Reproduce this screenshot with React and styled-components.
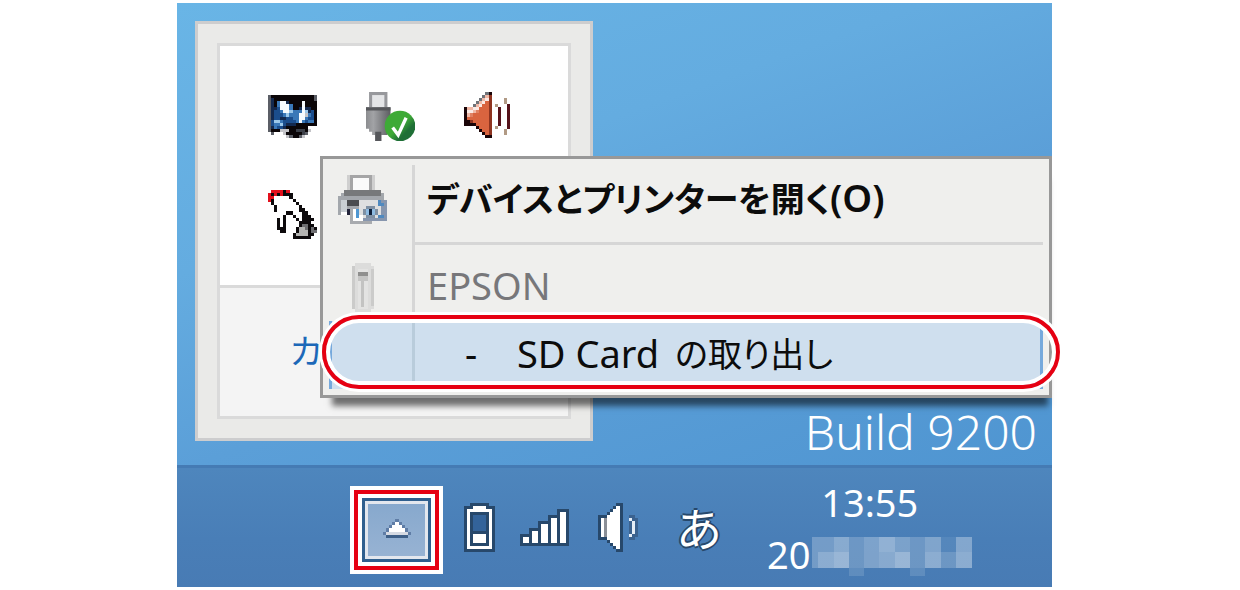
import React from 'react';
import styled, { createGlobalStyle } from 'styled-components';

const GlobalStyle = createGlobalStyle`
    * {
        box-sizing: border-box;
    }
    body {
        margin: 0;
        background: #fff;
        font-family: "Noto Sans", "Noto Sans CJK JP", sans-serif;
    }
    button {
        font: inherit;
        color: inherit;
        background: none;
        border: 0;
        padding: 0;
        margin: 0;
    }
`;

/* 16x16 bitmaps, one character per pixel */
const monitor = {
    colors: { g: '#5b5e66', d: '#3c4048', k: '#0b0608', n: '#13294f', b: '#3a78b8', B: '#1b4d8c', w: '#9cc8ea', W: '#f6fbff', s: '#c4c4c8' },
    rows: [
        '................',
        'gkkkkkkkkkkkkkkg',
        'gnkkkkkkkkkkkkkg',
        'gnkbWWnkkkkWkkkk',
        'gnkbWWWbkkkWkkkk',
        'gnnBWWWbkknWnnkk',
        'gnBBbWWwbbbWwnBk',
        'gnBBBbwbbbWWsbBk',
        'gnBBnnBBbbWWbBBk',
        'gBwwbBBBBbWbBbbk',
        'gBbbwBnnnkkkkkkk',
        'gnbBBnkkkkkkk...',
        'gkkkssskkdddks..',
        '.g...skkkkkdg...',
        '......sgkkgs....',
    ],
};

const speaker = {
    colors: { g: '#6f7378', k: '#1a0508', l: '#f0b8a6', w: '#fbe9e4', r: '#e08062', R: '#d9643f', D: '#8e3420', m: '#56131b', t: '#b19a85' },
    rows: [
        '.......gk.......',
        '......glD.......',
        '.....glwD....t..',
        '....glwRD....t..',
        '...glwRRD.t...m.',
        'kllwwRRRD..m..m.',
        'kwwlrRRRD..m..m.',
        'klrRRRRRD..m..m.',
        'kRRRRRRRD..m..m.',
        'kkDRRRRRD..m..m.',
        'kkkkRRRRD..m..m.',
        '....kRRRD.t...m.',
        '.....kRRD....t..',
        '......kRD....t..',
        '.......kk.......',
    ],
};

const tablet = {
    colors: { k: '#0d0a0c', r: '#e3101c', g: '#b4b4b2', d: '#6d6d70' },
    rows: [
        '.rrrrkr.........',
        'rkrkrkkk........',
        'rr.....k........',
        'rk......k.......',
        '.k.......k......',
        '..k.......k.....',
        '..k.......kk....',
        '......kk...kk...',
        '.....k..k..kkk..',
        '...k.k...k.kkkk.',
        '...k.k....kkkk..',
        '...k.k....kddkk.',
        '...kkk...kggdkdk',
        '....kk...kgggkdd',
        '........kggggkk.',
        '........kkkkkk..',
    ],
};

const PixelIcon = ({ art }) => (
    <svg width="49" height="49" viewBox="0 0 16 16" shapeRendering="crispEdges" aria-hidden="true">
        {art.rows.map((row, y) =>
            row.split('').map((c, x) =>
                c === '.' ? null : <rect key={x + '-' + y} x={x} y={y} width="1.03" height="1.03" fill={art.colors[c]} />
            )
        )}
    </svg>
);

const UsbIcon = () => (
    <svg width="49" height="49" viewBox="0 0 16 16" aria-hidden="true">
        <defs>
            <linearGradient id="plug" x1="0" x2="1">
                <stop offset="0" stopColor="#8b8c8f" />
                <stop offset="0.3" stopColor="#a2a3a6" />
                <stop offset="1" stopColor="#5c5d61" />
            </linearGradient>
            <linearGradient id="ok" x1="0" y1="0" x2="1" y2="1">
                <stop offset="0.5" stopColor="#3eaa36" />
                <stop offset="0.7" stopColor="#1f6f36" />
            </linearGradient>
        </defs>
        <path d="M1 0h6v5H1z" fill="#97989c" />
        <path d="M2 1h4v4H2z" fill="#e4e5e7" />
        <path d="M0 5h8v7H7v2H5v2H3v-2H2v-1H1v-1H0z" fill="url(#plug)" />
        <path d="M0 5h8v1H0z M3 13h2v3H3z" fill="#56575b" />
        <circle cx="11.1" cy="11.1" r="5" fill="url(#ok)" />
        <path d="M8.7 11.6l1.8 2.4 2.6-5.6" fill="none" stroke="#fff" strokeWidth="1.1" />
    </svg>
);

const PrinterIcon = () => (
    <svg width="49" height="49" viewBox="0 0 16 16" shapeRendering="crispEdges" aria-hidden="true">
        <path d="M3 0h9v6H3z" fill="#cfcfcf" />
        <path d="M4 0h7v5H4z" fill="#a5a5a6" />
        <path d="M5 1h5v4H5z" fill="#fafafa" />
        <path d="M1 6h1V5h12v1h1v2h1v5H0V7h1z" fill="#a3a7ac" />
        <path d="M2 5h12v2H2z" fill="#77797b" />
        <path d="M1 8h2v4H1z" fill="#c9cfd4" />
        <path d="M3 8h5v2H3z" fill="#4a4c50" />
        <path d="M1 12h3v1H1z" fill="#fff" />
        <path d="M3 11h1v2H3z" fill="#23243a" />
        <path d="M4 11h7v5H4z" fill="#a8abaf" />
        <path d="M5 11h5v4H5z" fill="#fff" />
        <path d="M6 11h1v3H6z" fill="#4f97d2" />
        <path d="M12 8h4v7H8v-1h4z" fill="#8796ae" />
        <path d="M7 8h6v1h1v4h-1v1H8v-1H7z" fill="#dedfe0" />
        <path d="M13 8h1v1h1v1h-2zM13 13h2v1h-2z" fill="#4f89bf" />
        <path d="M9 10h3v1h1v2h-1v1H9v-1H8v-2h1z" fill="#7f90a3" />
        <path d="M9 11h3v2H9z" fill="#8fbce2" />
        <path d="M10 11h1v2h-1z" fill="#0f1f3a" />
    </svg>
);

const DriveIcon = () => (
    <svg width="22" height="49" viewBox="0 0 22 49" shapeRendering="crispEdges" aria-hidden="true">
        <path d="M3 0h16v3h3v43h-3v3H3v-3H0V3h3z" fill="#dcdcdb" />
        <path d="M0 3h3v43H0zM19 6h3v37h-3z" fill="#cbcbca" />
        <path d="M6 6h10v40H6z" fill="#e3e3e2" />
        <path d="M6 9h10v9H6z" fill="#c4c4c3" />
        <path d="M6 9h10v4H6z" fill="#8f8f8e" />
        <path d="M9 18h3v26H9z" fill="#c3c3c2" />
    </svg>
);

const ArrowIcon = () => (
    <svg width="28" height="22" viewBox="0 0 9 7" shapeRendering="crispEdges" aria-hidden="true">
        <path d="M4 0h1v1h1v1h1v1h1v1h1v1H8v1H1V5H0V4h1V3h1V2h1V1h1z" fill="#5f7da6" />
        <path d="M4 1h1v1h1v1h1v1h1v1H1V4h1V3h1V2h1z" fill="#fff" />
        <path d="M1 4h7v1H1z" fill="#d5dae3" />
        <path d="M1 5h7v1H1z" fill="#3d5f88" />
    </svg>
);

const BatteryIcon = () => (
    <svg width="31" height="49" viewBox="0 0 10 16" shapeRendering="crispEdges" aria-hidden="true">
        <path d="M2 0h6v1h2v15H0V1h2z" fill="#27486b" />
        <path d="M3 1h4v1h2v13H1V2h2z" fill="#fff" />
        <path d="M2 3h6v11H2z" fill="#27486b" />
        <path d="M3 4h4v5H3z" fill="#33639a" />
        <path d="M3 10h4v3H3z" fill="#fff" />
    </svg>
);

const SignalIcon = () => (
    <svg width="49" height="37" viewBox="0 0 16 12" shapeRendering="crispEdges" aria-hidden="true">
        <path d="M0 8h3V6h3V4h3V2h3V0h4v12H0z" fill="#27486b" />
        <path d="M1 9h2v2H1zM4 7h2v4H4zM7 5h2v6H7zM10 3h2v8h-2zM13 1h2v10h-2z" fill="#fff" />
    </svg>
);

const VolumeIcon = () => (
    <svg width="43" height="49" viewBox="0 0 14 16" shapeRendering="crispEdges" aria-hidden="true">
        <path d="M0 4h3V3h1V2h1V1h1V0h2v16H6v-1H5v-1H4v-1H3v-1H0z" fill="#27486b" />
        <path d="M1 5h2V4h1V3h1V2h1V1h1v14H6v-1H5v-1H4v-1H3v-1H1z" fill="#fff" />
        <path d="M2 5h1v6H2z" fill="#8b8f96" />
        <path d="M10 4h2v1h1v6h-1v1h-2z" fill="#3b628f" />
        <path d="M10 5h1v1h1v4h-1v1h-1v-1h1V6h-1z" fill="#e6eef7" />
    </svg>
);

/* [x, y, width, height, opacity] */
const mosaic = [
    [0, 0, 22, 15, 0.24], [22, 0, 15, 15, 0.35], [37, 0, 15, 31, 0.2], [52, 0, 15, 31, 0.29],
    [67, 0, 16, 15, 0.4], [83, 0, 15, 15, 0.28], [98, 0, 15, 31, 0.2], [113, 0, 16, 15, 0.3],
    [129, 0, 15, 15, 0.07], [144, 0, 16, 15, 0.32],
    [0, 15, 6, 16, 0.24], [6, 15, 16, 16, 0.37], [22, 15, 15, 16, 0.44], [67, 15, 16, 16, 0.35],
    [83, 15, 15, 16, 0.44], [113, 15, 16, 16, 0.37], [129, 15, 15, 16, 0.2], [144, 15, 16, 16, 0.37],
    [37, 31, 15, 8, 0.13], [98, 31, 15, 8, 0.13],
];

const Mosaic = () => (
    <svg width="160" height="39" viewBox="0 0 160 39" shapeRendering="crispEdges" aria-hidden="true">
        {mosaic.map(([x, y, w, h, o]) => (
            <rect key={x + '-' + y} x={x} y={y} width={w} height={h} fill="#fff" fillOpacity={o} />
        ))}
    </svg>
);

const App = () => {
    return (
        <Page>
            <GlobalStyle />
            <Desktop>
                <Flyout>
                    <FlyoutBody>
                        <TrayGrid>
                            <button aria-label="Display"><PixelIcon art={monitor} /></button>
                            <button aria-label="USB"><UsbIcon /></button>
                            <button aria-label="Sound"><PixelIcon art={speaker} /></button>
                            <button aria-label="Pen"><PixelIcon art={tablet} /></button>
                        </TrayGrid>
                        <FlyoutFooter>
                            <CustomizeLink href="#customize">カ</CustomizeLink>
                        </FlyoutFooter>
                    </FlyoutBody>
                </Flyout>

                <Menu role="menu">
                    <MenuItem role="menuitem">
                        <MenuIcon><PrinterIcon /></MenuIcon>
                        <MenuLabel $bold><span><Kana>デバイスとプリンターを開く</Kana>(O)</span></MenuLabel>
                    </MenuItem>
                    <Separator><hr /></Separator>
                    <MenuItem role="menuitem" disabled>
                        <MenuIcon><DriveIcon /></MenuIcon>
                        <MenuLabel>EPSON</MenuLabel>
                    </MenuItem>
                    <ActiveItem role="menuitem">
                        <MenuIcon />
                        <MenuLabel $indent>
                            <Dash>-</Dash>
                            <CardName>SD Card</CardName>
                            <Kana>の取り出し</Kana>
                        </MenuLabel>
                    </ActiveItem>
                </Menu>

                <BuildLabel>Build 9200</BuildLabel>
            </Desktop>

            <Taskbar>
                <Marker>
                    <ShowHidden aria-label="Show hidden icons"><ArrowIcon /></ShowHidden>
                </Marker>
                <TrayButton aria-label="Battery"><BatteryIcon /></TrayButton>
                <TrayButton aria-label="Network"><SignalIcon /></TrayButton>
                <TrayButton aria-label="Volume"><VolumeIcon /></TrayButton>
                <TrayButton><Ime>あ</Ime></TrayButton>
                <Clock>
                    <span>13:55</span>
                    <ClockDate>20<Mosaic /></ClockDate>
                </Clock>
            </Taskbar>
        </Page>
    );
};

const Page = styled.div`
    display: flex;
    flex-direction: column;
    min-height: 100vh;
    padding: 3px 188px 3px 177px;
`;

const Desktop = styled.main`
    position: relative;
    flex: 1;
    display: flex;
    justify-content: flex-end;
    align-items: flex-end;
    min-height: 440px;
    padding: 0 15px 2px;
    background: linear-gradient(160deg, #69b5e6 0%, #64ace0 35%, #5b9fd8 60%, #4f95d1 100%);
`;

const BuildLabel = styled.div`
    color: #fff;
    font-size: 48px;
    font-weight: 300;
    line-height: 62px;
`;

const Flyout = styled.section`
    position: absolute;
    left: 18px;
    top: 18px;
    width: 398px;
    padding: 19px;
    border: 3px solid #cdcdce;
    background: #eaeae8;
`;

const FlyoutBody = styled.div`
    border: 3px solid #dadada;
    background: #fff;
`;

const TrayGrid = styled.div`
    display: grid;
    grid-template-columns: repeat(3, 49px);
    column-gap: 49px;
    row-gap: 49px;
    height: 239px;
    padding: 46px 48px;
    align-content: start;

    svg {
        display: block;
    }
`;

const FlyoutFooter = styled.div`
    height: 131px;
    padding: 43px 70px;
    border-top: 3px solid #dadada;
    background: #f4f4f4;
`;

const CustomizeLink = styled.a`
    display: block;
    width: 32px;
    color: #1c68b8;
    font-size: 34px;
    line-height: 40px;
    text-decoration: none;
    font-feature-settings: "palt";
`;

const Menu = styled.div`
    position: absolute;
    left: 143px;
    right: 0;
    top: 153px;
    display: flex;
    flex-direction: column;
    padding: 6px;
    border: 3px solid #989898;
    background: #efefed;
    box-shadow: 4px 16px 6px -8px rgba(0, 0, 0, 0.55);
`;

const MenuItem = styled.button`
    position: relative;
    display: grid;
    grid-template-columns: 83px 1fr;
    height: 68px;
    color: #0c0c0c;
    text-align: left;

    &:disabled {
        color: #77777a;
    }
`;

const MenuIcon = styled.span`
    display: flex;
    align-items: center;
    justify-content: center;
    padding-right: 16px;
`;

const MenuLabel = styled.span`
    display: flex;
    align-items: center;
    align-self: stretch;
    padding-left: ${props => props.$indent ? '50px' : '12px'};
    padding-bottom: 4px;
    border-left: 3px solid #d6d6d6;
    font-size: 38px;
    font-weight: ${props => props.$bold ? 600 : 400};
    line-height: 48px;
    white-space: nowrap;
`;

const Kana = styled.span`
    font-family: "Noto Sans CJK JP", sans-serif;
    font-size: 34px;
    font-feature-settings: "palt";
`;

const Dash = styled.span`
    width: 52px;
`;

const CardName = styled.span`
    margin-right: 16px;
`;

const Separator = styled.div`
    display: flex;
    align-items: center;
    height: 20px;
    margin-left: 83px;
    border-left: 3px solid #d6d6d6;

    hr {
        flex: 1;
        height: 3px;
        margin: 0;
        border: 0;
        background: #d6d6d6;
    }
`;

const ActiveItem = styled(MenuItem)`
    background: #cfdfee;
    box-shadow: inset 3px 0 #76a9dc, inset -3px 0 #76a9dc;

    ${MenuLabel} {
        border-left-color: #b9ccdb;
    }

    /* red callout around the row */
    &::after {
        content: "";
        position: absolute;
        top: -6px;
        bottom: 0;
        left: -7px;
        right: -17px;
        border: 4px solid #e60012;
        border-radius: 37px;
        box-shadow: 0 0 0 3px #fff, inset 0 0 0 4px #fff;
    }
`;

const Taskbar = styled.footer`
    display: grid;
    grid-template-columns: 93px 72px 58px 92px 68px auto;
    justify-content: start;
    align-items: center;
    height: 122px;
    padding-left: 173px;
    border-top: 3px solid #457bb4;
    background: linear-gradient(#4e86bd, #497eb7 60%, #487bb4);
    color: #fff;
`;

const Marker = styled.div`
    padding: 4px;
    border: 4px solid #e60012;
    outline: 4px solid #fff;
    margin: 4px 4px 0;
    background: #fff;
`;

const ShowHidden = styled.button`
    display: flex;
    align-items: center;
    justify-content: center;
    width: 100%;
    height: 64px;
    border: 3px solid #2f5f8e;
    background: linear-gradient(#86a8cd, #98b3d3);
    box-shadow: inset 0 0 0 3px #e3e7ee;
`;

const TrayButton = styled.button`
    display: flex;
    align-items: center;
    justify-content: center;
`;

const Ime = styled.span`
    font-family: "Noto Sans CJK JP", sans-serif;
    font-size: 46px;
    line-height: 44px;
    padding-bottom: 4px;
    text-shadow: 2px 0 #27486b, -2px 0 #27486b, 0 2px #27486b, 0 -2px #27486b;
`;

const Clock = styled.div`
    display: flex;
    flex-direction: column;
    align-items: center;
    padding-left: 34px;
    font-size: 38px;
    line-height: 52px;
`;

const ClockDate = styled.span`
    display: flex;
    align-items: center;
    gap: 2px;

    svg {
        margin-top: 6px;
    }
`;

export default App;
